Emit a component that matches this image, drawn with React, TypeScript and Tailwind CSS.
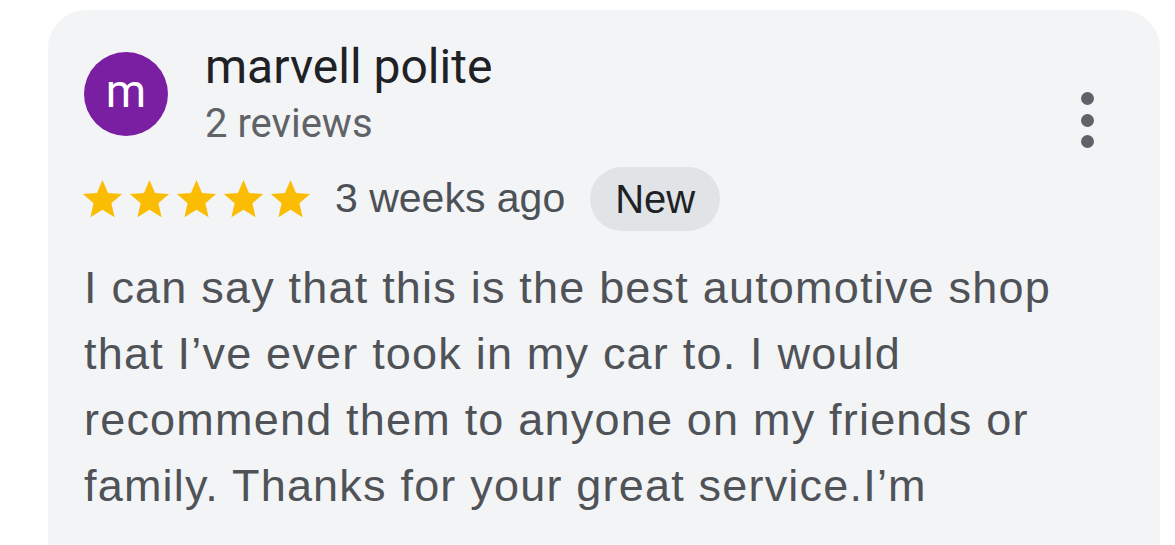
function Star() {
  return (
    <svg viewBox="0 0 24 24" className="w-[47px] h-[47px] shrink-0" fill="#fbbc04">
      <path d="M12 17.27L18.18 21l-1.64-7.03L22 9.24l-7.19-.61L12 2 9.19 8.63 2 9.24l5.46 4.73L5.82 21z" />
    </svg>
  );
}

export default function App() {
  return (
    <div className="w-[1175px] h-[545px] overflow-hidden bg-white pt-[10px] pl-[48px] pr-[15px]">
      <div className="bg-[#f3f4f6] rounded-t-[38px] h-[600px] pt-[33px] pl-[36px] pr-[36px]">
        <div className="flex justify-between items-start">
          <div className="flex items-start">
            <div className="mt-[9px] w-[84px] h-[84px] rounded-full bg-[#7b1fa2] flex items-center justify-center text-white text-[46px] leading-none pb-[6px] font-['Roboto',sans-serif]">
              m
            </div>
            <div className="ml-[37px] font-['Roboto',sans-serif]">
              <div className="text-[48px] leading-[48px] text-[#202124]">marvell polite</div>
              <div className="mt-[11px] text-[40px] leading-[44px] text-[#5f6368]">2 reviews</div>
            </div>
          </div>
          <div className="mt-[49px] mr-[30px] flex flex-col gap-[8.5px]">
            <span className="block w-[13px] h-[13px] rounded-full bg-[#5f6368]" />
            <span className="block w-[13px] h-[13px] rounded-full bg-[#5f6368]" />
            <span className="block w-[13px] h-[13px] rounded-full bg-[#5f6368]" />
          </div>
        </div>

        <div className="mt-[19px] flex items-center font-['Liberation_Sans',Arial,sans-serif]">
          <div className="flex ml-[-5px]">
            <Star />
            <Star />
            <Star />
            <Star />
            <Star />
          </div>
          <span className="ml-[21px] text-[41px] text-[#4d5156]">3 weeks ago</span>
          <span className="ml-[25px] h-[64px] px-[25px] rounded-full bg-[#e1e4e7] flex items-center text-[40px] text-[#202124]">
            New
          </span>
        </div>

        <p className="mt-[24px] text-[45px] tracking-[1.2px] leading-[66px] text-[#4f5256] font-['Liberation_Sans',Arial,sans-serif] max-w-[1000px]">
          I can say that this is the best automotive shop that I’ve ever took in my car to. I would recommend them to anyone on my friends or family. Thanks for your great service.I’m
        </p>
      </div>
    </div>
  );
}
